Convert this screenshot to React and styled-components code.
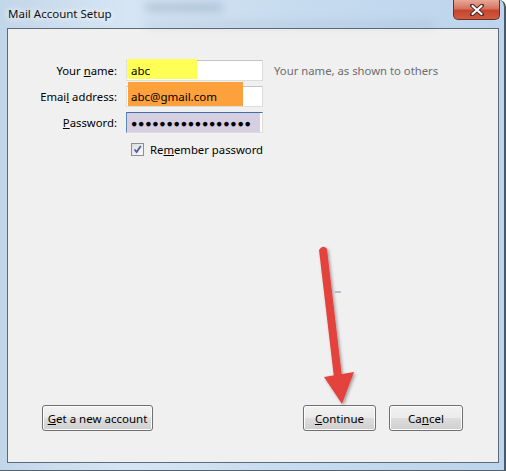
import React from 'react';
import styled, { createGlobalStyle } from 'styled-components';

const Global = createGlobalStyle`
  html, body { margin: 0; padding: 0; background: #fff; }
  body { font-family: "Noto Sans", "Open Sans", sans-serif; }
`;

const Window = styled.div`
  position: relative;
  width: 506px;
  height: 471px;
  box-sizing: border-box;
  display: flex;
  flex-direction: column;
  background: linear-gradient(90deg, #c2d6ea 0%, #d6e5f3 25%, #c6dbef 60%, #bcd4ec 100%);
  border-right: 2px solid #4b5866;
  border-bottom: 1px solid #56636f;
  border-top-right-radius: 7px;
  overflow: hidden;
  font-size: 11.3px;
  color: #000;
`;

const TitleBar = styled.div`
  position: relative;
  height: 28px;
  display: flex;
  justify-content: space-between;
  align-items: flex-start;
  flex-shrink: 0;
`;

const Glass = styled.div`
  position: absolute;
  left: 145px;
  top: ${p => p.$top}px;
  width: ${p => p.$width}px;
  height: ${p => p.$height}px;
  background: rgba(70, 95, 130, ${p => p.$alpha});
  filter: blur(4px);
  border-radius: 4px;
`;

const Title = styled.div`
  position: relative;
  padding: 6px 0 0 8px;
  font-size: 11.5px;
  color: #111;
  text-shadow: 0 0 6px #fff, 0 0 10px #fff;
`;

const CloseButton = styled.div`
  position: relative;
  width: 45px;
  height: 19px;
  margin-right: 4px;
  border: 1px solid #6a3227;
  border-top: none;
  border-radius: 0 0 5px 5px;
  background: linear-gradient(180deg, #e9a898 0%, #d7735f 45%, #c4452e 55%, #d25a3f 100%);
  display: flex;
  align-items: center;
  justify-content: center;
`;

const Client = styled.div`
  flex: 1;
  margin: 0 5px 7px 7px;
  border: 1px solid #5d6a78;
  background: #f0f0f0;
  display: flex;
  flex-direction: column;
`;

const Form = styled.div`
  display: grid;
  grid-template-columns: 109px 137px auto;
  column-gap: 9px;
  row-gap: 5px;
  padding-top: 31px;
  align-items: center;
`;

const Label = styled.div`
  text-align: right;
  white-space: nowrap;
`;

const Hint = styled.div`
  margin-left: 2px;
  color: #6d6d6d;
  white-space: nowrap;
`;

const Field = styled.div`
  position: relative;
  height: 21px;
  box-sizing: border-box;
  border: 1px solid #dcdcdc;
  border-top-color: ${p => (p.$focus ? '#3d6fa8' : '#c4c4c4')};
  border-left-color: ${p => (p.$focus ? '#5a86b8' : '#e2e2e2')};
  background: ${p => p.$bg || '#fff'};
  display: flex;
  align-items: center;
  padding-left: 4px;
  white-space: nowrap;
`;

const Mark = styled.span`
  position: absolute;
  left: ${p => p.$left}px;
  top: ${p => p.$top}px;
  width: ${p => p.$width}px;
  height: ${p => p.$height}px;
  background: ${p => p.$color};
`;

const FieldText = styled.span`
  position: relative;
  letter-spacing: ${p => p.$spacing || 0}px;
  font-size: ${p => p.$size || 11.5}px;
`;

const CheckRow = styled.label`
  grid-column: 2 / 4;
  display: flex;
  align-items: center;
  gap: 6px;
  padding: 4px 0 0 5px;
`;

const CheckBox = styled.span`
  width: 11px;
  height: 11px;
  border: 1px solid #8e8f8f;
  background: linear-gradient(135deg, #dcdcdc, #fbfbfb);
  display: flex;
  align-items: center;
  justify-content: center;
`;

const Spacer = styled.div`
  flex: 1;
`;

const Footer = styled.div`
  display: flex;
  align-items: center;
  padding: 0 35px 31px 34px;
  gap: 13px;
`;

const Button = styled.button`
  height: 26px;
  width: ${p => p.$width}px;
  box-sizing: border-box;
  border: 1px solid #707070;
  border-radius: 3px;
  background: linear-gradient(180deg, #f2f2f2 0%, #ebebeb 48%, #dddddd 52%, #cfcfcf 100%);
  box-shadow: inset 0 0 0 1px #fcfcfc;
  font-family: inherit;
  font-size: 11.5px;
  color: #000;
  padding: 0;
  margin-right: ${p => p.$push ? 'auto' : '0'};
`;

const Arrow = styled.svg`
  position: absolute;
  left: 300px;
  top: 230px;
  pointer-events: none;
`;

const Smudge = styled.span`
  position: absolute;
  left: 335px;
  top: 291px;
  width: 6px;
  height: 2px;
  background: #c2bace;
`;

export default function App() {
  return (
    <>
      <Global />
      <Window>
        <TitleBar>
          <Glass $top={3} $width={78} $height={9} $alpha={0.22} />
          <Glass $top={22} $width={290} $height={6} $alpha={0.12} />
          <Title>Mail Account Setup</Title>
          <CloseButton>
            <svg width="14" height="12" viewBox="0 0 14 12">
              <path d="M2 1.5 L12 10.5 M12 1.5 L2 10.5" stroke="#4a2a24" strokeWidth="4" strokeLinecap="round" />
              <path d="M2.5 2 L11.5 10 M11.5 2 L2.5 10" stroke="#fff" strokeWidth="2.2" strokeLinecap="round" />
            </svg>
          </CloseButton>
        </TitleBar>
        <Client>
          <Form>
            <Label>Your <u>n</u>ame:</Label>
            <Field>
              <Mark $left={0} $top={-2} $width={70} $height={20} $color="#ffff55" />
              <FieldText>abc</FieldText>
            </Field>
            <Hint>Your name, as shown to others</Hint>

            <Label>Emai<u>l</u> address:</Label>
            <Field>
              <Mark $left={1} $top={-5} $width={115} $height={24} $color="#fca13b" />
              <FieldText>abc@gmail.com</FieldText>
            </Field>
            <div />

            <Label><u>P</u>assword:</Label>
            <Field $focus $bg="linear-gradient(90deg, #d6cee1 0, #d6cee1 133px, #fff 133px)">
              <FieldText $size={10.5} $spacing={0.75}>●●●●●●●●●●●●●●●●●</FieldText>
            </Field>
            <div />

            <div />
            <CheckRow>
              <CheckBox>
                <svg width="9" height="9" viewBox="0 0 9 9">
                  <path d="M1.5 4.5 L3.6 7 L7.8 1" fill="none" stroke="#4b61a0" strokeWidth="1.8" />
                </svg>
              </CheckBox>
              <span>Re<u>m</u>ember password</span>
            </CheckRow>
          </Form>
          <Spacer />
          <Footer>
            <Button $width={111} $push><u>G</u>et a new account</Button>
            <Button $width={73}><u>C</u>ontinue</Button>
            <Button $width={74}>Ca<u>n</u>cel</Button>
          </Footer>
        </Client>
        <Smudge />
        <Arrow width="70" height="180" viewBox="300 230 70 180">
          <defs>
            <filter id="sh" x="-50%" y="-20%" width="200%" height="140%">
              <feDropShadow dx="1.5" dy="1.5" stdDeviation="1.5" floodColor="#000" floodOpacity="0.35" />
            </filter>
          </defs>
          <g filter="url(#sh)" fill="#e4433d">
            <path d="M319 250 Q323 244 327 249 L342 377 L334 378 Z" />
            <path d="M324 377 L354 372 L342 404 Z" />
          </g>
        </Arrow>
      </Window>
    </>
  );
}
